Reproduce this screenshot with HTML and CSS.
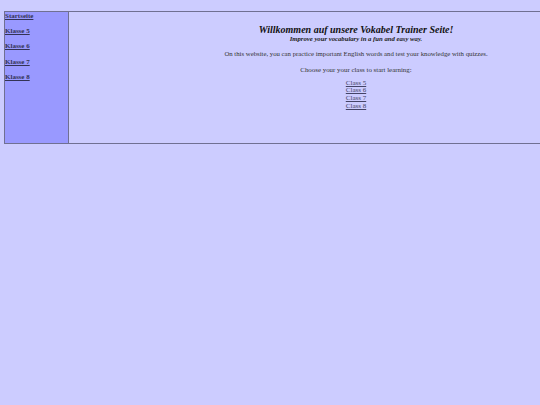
FILE: index.html
```html
<!DOCTYPE html>
<html lang="de">
<head>
<meta charset="utf-8">
<title>Vokabel Trainer</title>
<link rel="stylesheet" href="styles.css">
</head>
<body>
<div class="viewport">
<div class="frame">
  <nav class="sidebar">
    <a href="#">Startseite</a>
    <a href="#">Klasse 5</a>
    <a href="#">Klasse 6</a>
    <a href="#">Klasse 7</a>
    <a href="#">Klasse 8</a>
  </nav>
  <main class="content">
    <h1 class="title">Willkommen auf unsere Vokabel Trainer Seite!</h1>
    <p class="subtitle">Improve your vocabulary in a fun and easy way.</p>
    <p class="intro">On this website, you can practice important English words and test your knowledge with quizzes.</p>
    <p class="choose">Choose your your class to start learning:</p>
    <div class="classes">
      <a href="#">Class 5</a>
      <a href="#">Class 6</a>
      <a href="#">Class 7</a>
      <a href="#">Class 8</a>
    </div>
  </main>
</div>
</div>
</body>
</html>
```
FILE: styles.css
```css
html, body {
  margin: 0;
  padding: 0;
  background: #ccccff;
}
body {
  font-family: "Liberation Serif", "Times New Roman", serif;
  color: #222;
}
.viewport {
  width: 100%;
  overflow: hidden;
  padding-top: 11px;
}
.frame {
  margin-left: 4px;
  width: 638px;
  height: 131px;
  display: flex;
  border: 1px solid #707092;
}
.sidebar {
  width: 63px;
  flex: none;
  background: #9999ff;
  border-right: 1px solid #707092;
  display: flex;
  flex-direction: column;
  gap: 7.2px;
}
.sidebar a {
  font-size: 7px;
  line-height: 8px;
  font-weight: bold;
  color: #333355;
  text-decoration: underline;
  align-self: flex-start;
}
.content {
  flex: 1;
  display: flex;
  flex-direction: column;
  align-items: center;
  padding-top: 11.5px;
}
.title {
  margin: 0;
  font-size: 10px;
  line-height: 11px;
  font-style: italic;
  font-weight: bold;
  color: #111;
}
.subtitle {
  margin: 0;
  font-size: 6.7px;
  line-height: 8px;
  font-style: italic;
  font-weight: bold;
  color: #222;
}
.intro {
  margin: 7px 0 0;
  font-size: 6.75px;
  line-height: 8px;
  color: #333;
}
.choose {
  margin: 8px 0 0;
  font-size: 6.9px;
  line-height: 8px;
  color: #333;
}
.classes {
  margin-top: 6px;
  display: flex;
  flex-direction: column;
  align-items: center;
}
.classes a {
  font-size: 7px;
  line-height: 7.67px;
  color: #444466;
  text-decoration: underline;
}
```
